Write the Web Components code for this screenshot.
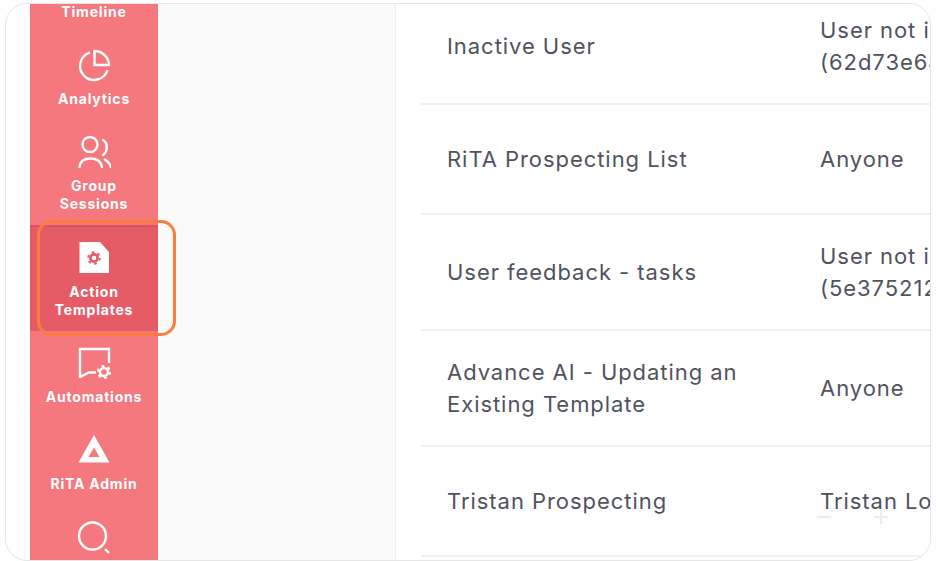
<!DOCTYPE html>
<html>
<head>
<meta charset="utf-8">
<title>Action Templates</title>
<style>
  html, body { margin: 0; padding: 0; background: #fff; height: 100%; overflow: hidden; }
  body { font-family: "Inter", "Open Sans", sans-serif; }
</style>
</head>
<body>
<app-frame>
  <side-nav slot="nav">
    <nav-item label="Timeline"></nav-item>
    <nav-item label="Analytics">
      <svg slot="icon" viewBox="0 0 34 34" fill="none" stroke="#fff" stroke-width="2.4">
        <path d="M13 4.5A14 14 0 1 0 30.5 22"/>
        <path d="M17.5 3V17H32A14.5 14.5 0 0 0 17.5 3Z"/>
      </svg>
    </nav-item>
    <nav-item label="Group Sessions" tall>
      <svg slot="icon" viewBox="0 0 34 34" fill="none" stroke="#fff" stroke-width="2.4" stroke-linecap="round">
        <circle cx="13" cy="9.5" r="7.5"/>
        <path d="M2.5 32C3 26.5 7 23.5 13.5 23.5C20 23.5 24 26.5 25 32"/>
        <path d="M26 5C31 8 31 16 26 20"/>
        <path d="M28 24.5C31 26.5 33 29 34 32"/>
      </svg>
    </nav-item>
    <nav-item label="Action Templates" tall active>
      <svg slot="icon" viewBox="0 0 34 34">
        <path d="M2.5 1H23L32 11V32H2.5Z" fill="#fff"/>
        <circle cx="17" cy="17" r="3.6" fill="none" stroke="#e55c67" stroke-width="2.6"/>
        <circle cx="17" cy="17" r="5.8" fill="none" stroke="#e55c67" stroke-width="2" stroke-dasharray="2.6 3.47"/>
      </svg>
    </nav-item>
    <nav-item label="Automations">
      <svg slot="icon" viewBox="0 0 34 34" fill="none" stroke="#fff" stroke-width="2.4">
        <path d="M3 32V3H32V17"/>
        <path d="M3 31L12 26.5H19"/>
        <circle cx="27" cy="26" r="4"/>
        <circle cx="27" cy="26" r="6" stroke-width="2.2" stroke-dasharray="2.8 3.48"/>
      </svg>
    </nav-item>
    <nav-item label="RiTA Admin">
      <svg slot="icon" viewBox="0 0 34 34">
        <path fill="#fff" fill-rule="evenodd" d="M17 2L32.5 29.5H1.5ZM17 14.5L11.5 24H22.5Z"/>
      </svg>
    </nav-item>
    <nav-item label="Search">
      <svg slot="icon" viewBox="0 0 34 34" fill="none" stroke="#fff" stroke-width="2.4">
        <circle cx="15.5" cy="16" r="13.5"/>
        <path d="M28 29L32 33"/>
      </svg>
    </nav-item>
  </side-nav>
  <template-table slot="main">
    <table-row name="Inactive User">User not in list<br>(62d73e68a1f04c)</table-row>
    <table-row name="RiTA Prospecting List">Anyone</table-row>
    <table-row name="User feedback - tasks">User not in list<br>(5e3752128c9d0a)</table-row>
    <table-row name="Advance AI - Updating an Existing Template">Anyone</table-row>
    <table-row name="Tristan Prospecting">Tristan Long</table-row>
  </template-table>
  <zoom-control slot="overlay"></zoom-control>
</app-frame>

<script>
// screenshot frame with the rounded corners, everything else gets clipped by it
class AppFrame extends HTMLElement {
  constructor() {
    super();
    const shadow = this.attachShadow({ mode: 'open' });
    shadow.innerHTML = `
      <style>
        :host {
          display: block;
          position: relative;
          box-sizing: border-box;
          width: 926px;
          height: 558px;
          margin: 3px 0 0 5px;
          border: 1px solid #e6e6e6;
          border-radius: 22px;
          overflow: hidden;
          background: #fff;
        }
        .layout {
          display: flex;
          height: 100%;
          padding-left: 24px;
        }
        .middle {
          flex: 0 0 237px;
          background: #fafafa;
          border-right: 1px solid #ededed;
        }
        .main { flex: 1; min-width: 0; overflow: hidden; }
      </style>
      <div class="layout">
        <slot name="nav"></slot>
        <div class="middle"></div>
        <div class="main"><slot name="main"></slot></div>
      </div>
      <slot name="overlay"></slot>
    `;
  }
}

class SideNav extends HTMLElement {
  constructor() {
    super();
    const shadow = this.attachShadow({ mode: 'open' });
    shadow.innerHTML = `
      <style>
        :host {
          display: block;
          flex: 0 0 128px;
          background: #f5787f;
        }
        /* the list is scrolled, Timeline only shows its label */
        .list { display: flex; flex-direction: column; margin-top: -59px; }
      </style>
      <div class="list"><slot></slot></div>
    `;
  }
}

class NavItem extends HTMLElement {
  constructor() {
    super();
    const shadow = this.attachShadow({ mode: 'open' });
    const label = this.getAttribute('label') || '';
    shadow.innerHTML = `
      <style>
        :host {
          display: flex;
          flex-direction: column;
          align-items: center;
          position: relative;
          padding: 16px 0 11px;
          color: #fff;
          font-family: "Inter", "Open Sans", sans-serif;
          font-weight: 700;
          font-size: 14px;
          letter-spacing: .8px;
          line-height: 18px;
          text-align: center;
        }
        :host([tall]) { padding-bottom: 12px; }
        :host([active]) {
          background: #e55c67;
          box-shadow: inset 0 2px 2px rgba(160, 50, 60, .18);
          margin-bottom: -1px;
        }
        :host([active])::after {
          content: "";
          position: absolute;
          left: 7px;
          right: -18px;
          top: -5px;
          bottom: -5px;
          border: 3.5px solid #ff7a3d;
          border-radius: 15px;
        }
        .icon { width: 34px; height: 34px; margin-bottom: 8px; }
        ::slotted(svg) { display: block; width: 34px; height: 34px; }
        .label { width: 100px; }
      </style>
      <div class="icon"><slot name="icon"></slot></div>
      <div class="label">${label}</div>
    `;
  }
}

class TemplateTable extends HTMLElement {
  constructor() {
    super();
    const shadow = this.attachShadow({ mode: 'open' });
    shadow.innerHTML = `
      <style>
        :host { display: block; padding-left: 25px; }
        .rows { margin-top: -15px; }
      </style>
      <div class="rows"><slot></slot></div>
    `;
  }
}

class TableRow extends HTMLElement {
  constructor() {
    super();
    const shadow = this.attachShadow({ mode: 'open' });
    const name = this.getAttribute('name') || '';
    shadow.innerHTML = `
      <style>
        :host {
          display: grid;
          grid-template-columns: 373px 400px;
          align-items: center;
          box-sizing: border-box;
          min-height: 110px;
          padding: 25px 0 25px 26px;
          border-bottom: 2px solid #f1f1f1;
          color: #50535e;
          font-family: "Inter", "Open Sans", sans-serif;
          font-size: 22px;
          letter-spacing: .95px;
          line-height: 32px;
        }
        .name { width: 310px; }
        .value { white-space: nowrap; }
      </style>
      <div class="name">${name}</div>
      <div class="value"><slot></slot></div>
    `;
  }
}

// faint zoom buttons floating over the bottom right of the table
class ZoomControl extends HTMLElement {
  constructor() {
    super();
    const shadow = this.attachShadow({ mode: 'open' });
    shadow.innerHTML = `
      <style>
        :host {
          position: absolute;
          right: 13px;
          bottom: 8px;
          display: flex;
          align-items: center;
          gap: 39px;
          box-sizing: border-box;
          width: 128px;
          height: 70px;
          padding-left: 26px;
          border-radius: 22px;
          background: rgba(0, 0, 0, .005);
        }
        svg { width: 18px; height: 18px; }
      </style>
      <svg viewBox="0 0 18 18" stroke="#ececec" stroke-width="2"><path d="M2 9H16"/></svg>
      <svg viewBox="0 0 18 18" stroke="#ececec" stroke-width="2"><path d="M2 9H16M9 2V16"/></svg>
    `;
  }
}

customElements.define('app-frame', AppFrame);
customElements.define('side-nav', SideNav);
customElements.define('nav-item', NavItem);
customElements.define('template-table', TemplateTable);
customElements.define('table-row', TableRow);
customElements.define('zoom-control', ZoomControl);
</script>
</body>
</html>
